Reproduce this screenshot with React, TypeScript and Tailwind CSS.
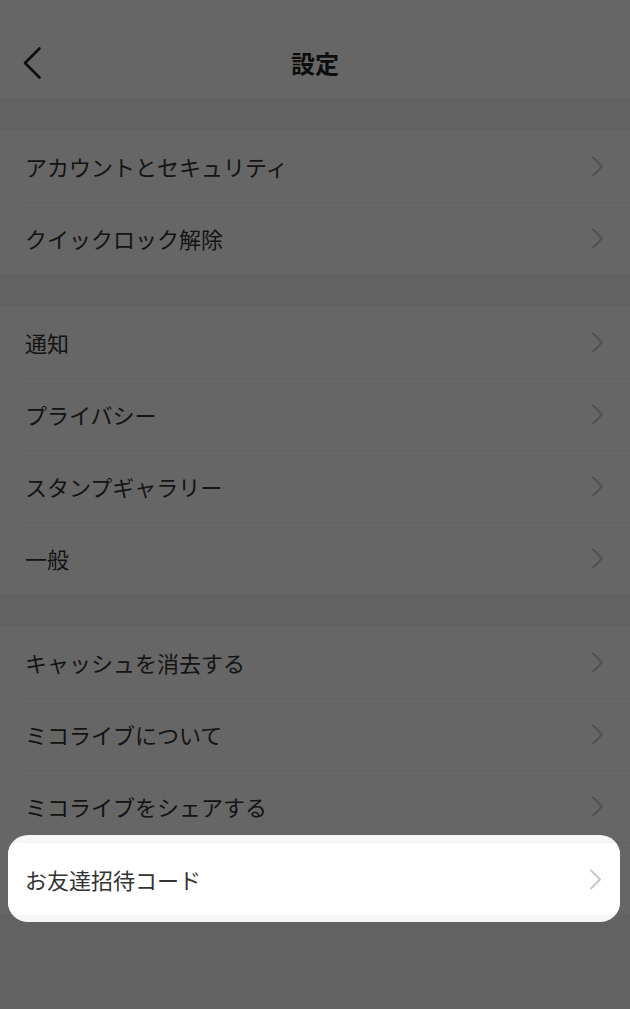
import React from "react";

const font = { fontFamily: '"Noto Sans CJK JP", "Noto Sans", sans-serif' };

type Section = string[];

const sections: Section[] = [
    ["アカウントとセキュリティ", "クイックロック解除"],
    ["通知", "プライバシー", "スタンプギャラリー", "一般"],
    ["キャッシュを消去する", "ミコライブについて", "ミコライブをシェアする", "お友達招待コード"],
];

function Chevron() {
    return (
        <svg width="13" height="21" viewBox="0 0 13 21" fill="none" className="shrink-0">
            <path d="M2 1.5 L11 10.5 L2 19.5" stroke="#c8c8c8" strokeWidth="2" strokeLinecap="round" strokeLinejoin="round" />
        </svg>
    );
}

function Row({ label, divider }: { label: string; divider: boolean }) {
    return (
        <div className="relative h-[72px] flex items-center justify-between pl-[25px] pr-[26px] bg-white">
            {divider && <div className="absolute top-0 left-[24px] right-0 h-px bg-[#efefef]" />}
            <span className="text-[22px] text-[#333333] leading-none">{label}</span>
            <Chevron />
        </div>
    );
}

export default function App() {
    return (
        <div className="relative w-[630px] h-[1009px] overflow-hidden bg-[#f5f5f5]" style={font}>
            <header className="relative h-[98px] bg-white flex justify-center pt-[50px]">
                <svg width="20" height="34" viewBox="0 0 20 34" fill="none" className="absolute left-[22px] top-[46px]">
                    <path d="M17.5 2.5 L3 17 L17.5 31.5" stroke="#222222" strokeWidth="2.6" strokeLinecap="round" strokeLinejoin="round" />
                </svg>
                <h1 className="text-[24px] font-bold text-[#222222] leading-[26px] h-[26px]">設定</h1>
            </header>

            <div className="flex flex-col gap-[32px] pt-[32px]">
                {sections.map((rows, i) => (
                    <div key={i} className="flex flex-col">
                        {rows.map((label, j) => (
                            <Row key={label} label={label} divider={j > 0} />
                        ))}
                    </div>
                ))}
            </div>

            {/* dimmed overlay */}
            <div className="absolute inset-0 bg-black/60" />

            {/* highlighted item */}
            <div className="absolute left-[8px] top-[835px] w-[612px] h-[87px] rounded-[20px] overflow-hidden bg-[#f7f7f7]">
                <div className="relative mt-[8px] h-[72px] flex items-center justify-between pl-[17px] pr-[18px] bg-white">
                    <div className="absolute -top-[1px] left-[16px] right-0 h-px bg-[#efefef]" />
                    <span className="text-[22px] text-[#333333] leading-none">お友達招待コード</span>
                    <Chevron />
                </div>
            </div>
        </div>
    );
}
